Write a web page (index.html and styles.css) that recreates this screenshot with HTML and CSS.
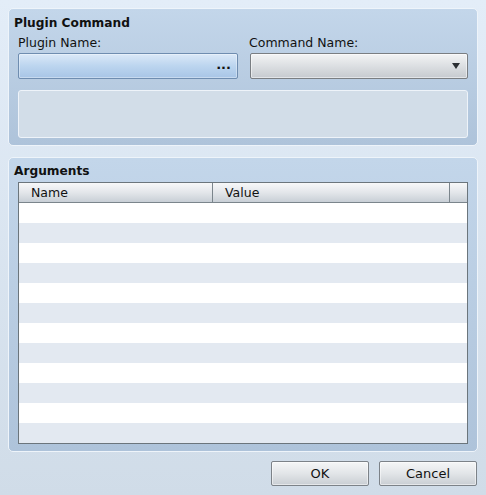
FILE: index.html
```html
<!DOCTYPE html>
<html>
<head>
<meta charset="utf-8">
<link rel="stylesheet" href="styles.css">
</head>
<body>
<div class="dialog">
  <section class="group group-cmd">
    <div class="group-title">Plugin Command</div>
    <div class="fields">
      <div class="field">
        <div class="label">Plugin Name:</div>
        <div class="picker"><span class="dots">...</span></div>
      </div>
      <div class="field">
        <div class="label">Command Name:</div>
        <div class="select"><span class="arrow"></span></div>
      </div>
    </div>
    <div class="desc"></div>
  </section>

  <section class="group group-args">
    <div class="group-title">Arguments</div>
    <div class="table">
      <div class="thead">
        <div class="th th-name">Name</div>
        <div class="th th-value">Value</div>
        <div class="th th-pad"></div>
      </div>
      <div class="tbody">
        <div class="row"></div><div class="row"></div><div class="row"></div>
        <div class="row"></div><div class="row"></div><div class="row"></div>
        <div class="row"></div><div class="row"></div><div class="row"></div>
        <div class="row"></div><div class="row"></div><div class="row"></div>
      </div>
    </div>
  </section>

  <div class="buttons">
    <button class="btn">OK</button>
    <button class="btn">Cancel</button>
  </div>
</div>
</body>
</html>
```

FILE: styles.css
```css
* { box-sizing: border-box; }
html, body { margin: 0; height: 100%; }
body {
  font-family: "DejaVu Sans", Verdana, sans-serif;
  font-size: 12.5px;
  color: #111;
  background: linear-gradient(#e3edf8, #d0dce8);
  padding: 8px;
}
.dialog { display: flex; flex-direction: column; }

.group {
  border: 1px solid #eef4fa;
  border-radius: 5px;
  background: linear-gradient(#c3d6ea, #aec3da);
  padding: 0 9px 7px 9px;
}
.group-cmd { height: 138px; padding-top: 6px; }
.group-args { height: 295px; margin-top: 11px; padding-top: 5px; }

.group-title {
  font-weight: bold;
  font-size: 12.2px;
  line-height: 16px;
  height: 16px;
  margin-left: -4px;
}
.fields {
  display: grid;
  grid-template-columns: 220px 1fr;
  column-gap: 11px;
  margin-top: 4px;
}
.label { line-height: 16px; height: 16px; margin-bottom: 2px; }
.picker {
  height: 26px;
  border: 1px solid #6f8db0;
  border-radius: 2px;
  background: linear-gradient(#dbe9f8, #bcd5ef 50%, #a8c5e6);
  box-shadow: inset 0 0 0 1px rgba(255,255,255,.35);
  display: flex;
  align-items: center;
  justify-content: flex-end;
  padding-right: 6px;
}
.dots { font-size: 13px; font-weight: bold; line-height: 1; position: relative; top: -2px; }
.select {
  height: 26px;
  margin-left: 1px;
  border: 1px solid #7a7e82;
  border-radius: 2px;
  background: linear-gradient(#f3f4f5, #dcdfe2 50%, #c6cacf);
  box-shadow: inset 0 0 0 1px rgba(255,255,255,.5);
  display: flex;
  align-items: center;
  justify-content: flex-end;
  padding-right: 7px;
}
.arrow {
  width: 0; height: 0;
  border-left: 4px solid transparent;
  border-right: 4px solid transparent;
  border-top: 6px solid #2b2f33;
}
.desc {
  margin-top: 11px;
  height: 48px;
  border: 1px solid #eef3f9;
  border-radius: 3px;
  background: #d2dde8;
}

.table {
  margin-top: 3px;
  height: 262px;
  border: 1px solid #6b757c;
  background: #fff;
}
.thead {
  display: flex;
  height: 20px;
  border-bottom: 1px solid #7b858c;
  background: linear-gradient(#f7f8f9, #e3e6ea 50%, #c8cfd6);
}
.th { line-height: 19px; padding-left: 12px; }
.th-name { width: 194px; border-right: 1px solid #7b858c; }
.th-value { flex: 1; border-right: 1px solid #7b858c; }
.th-pad { width: 17px; padding: 0; }
.row { height: 20px; background: #fff; }
.row:nth-child(even) { background: #e3e9f1; }

.buttons {
  display: flex;
  justify-content: flex-end;
  gap: 10px;
  margin-top: 9px;
  padding-right: 1px;
}
.btn {
  width: 98px;
  height: 25px;
  font-family: inherit;
  font-size: 13px;
  color: #111;
  border: 1px solid #7c8288;
  border-radius: 2px;
  background: linear-gradient(#f5f6f7, #e2e5e8 50%, #c9ced3);
  box-shadow: inset 0 0 0 1px rgba(255,255,255,.5);
  padding: 0;
}
```
